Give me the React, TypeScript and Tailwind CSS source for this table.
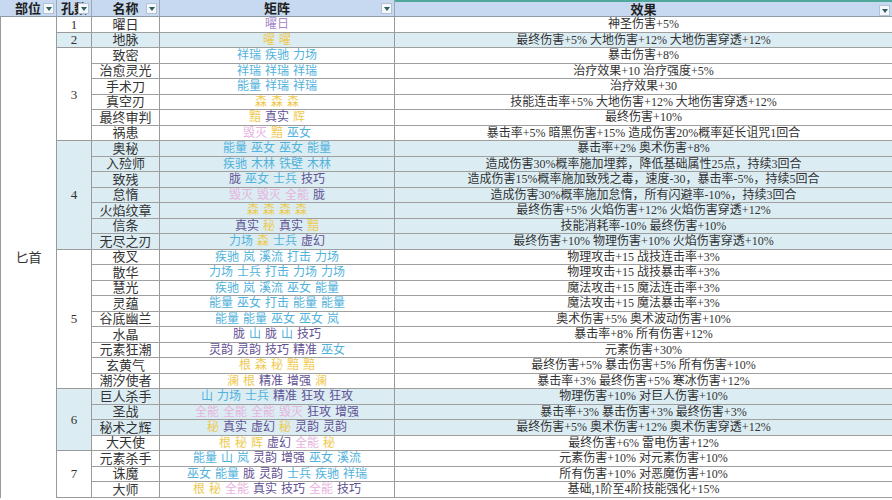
import React from "react";

// colour of each matrix word
const tone: Record<string, string> = {
  b: "text-[#52b2dc]",
  p: "text-[#5f5093]",
  k: "text-[#e7b4de]",
  y: "text-[#efca4f]",
  m: "text-[#a688c9]",
};

type Row = { name: string; matrix: string; effect: string; hl?: boolean };
type Group = { n: string; hl?: boolean; rows: Row[] };

const groups: Group[] = [
  { n: "1", rows: [{ name: "曜日", matrix: "m:曜日", effect: "神圣伤害+5%" }] },
  {
    n: "2",
    hl: true,
    rows: [{ name: "地脉", matrix: "y:曜 y:曜", effect: "最终伤害+5% 大地伤害+12% 大地伤害穿透+12%", hl: true }],
  },
  {
    n: "3",
    rows: [
      { name: "致密", matrix: "b:祥瑞 b:疾驰 b:力场", effect: "暴击伤害+8%" },
      { name: "治愈灵光", matrix: "b:祥瑞 b:祥瑞 b:祥瑞", effect: "治疗效果+10 治疗强度+5%" },
      { name: "手术刀", matrix: "b:能量 b:祥瑞 b:祥瑞", effect: "治疗效果+30" },
      { name: "真空刃", matrix: "y:森 y:森 y:森", effect: "技能连击率+5% 大地伤害+12% 大地伤害穿透+12%" },
      { name: "最终审判", matrix: "y:黯 p:真实 y:辉", effect: "最终伤害+10%" },
      { name: "祸患", matrix: "k:毁灭 y:黯 b:巫女", effect: "暴击率+5% 暗黑伤害+15% 造成伤害20%概率延长诅咒1回合" },
    ],
  },
  {
    n: "4",
    hl: true,
    rows: [
      { name: "奥秘", matrix: "b:能量 b:巫女 b:巫女 b:能量", effect: "暴击率+2% 奥术伤害+8%", hl: true },
      { name: "入殓师", matrix: "b:疾驰 b:木林 b:铁壁 b:木林", effect: "造成伤害30%概率施加埋葬，降低基础属性25点，持续3回合", hl: true },
      { name: "致残", matrix: "p:胧 b:巫女 b:士兵 p:技巧", effect: "造成伤害15%概率施加致残之毒，速度-30，暴击率-5%，持续5回合", hl: true },
      { name: "怠惰", matrix: "k:毁灭 k:毁灭 k:全能 p:胧", effect: "造成伤害30%概率施加怠惰，所有闪避率-10%，持续3回合", hl: true },
      { name: "火焰纹章", matrix: "y:森 y:森 y:森 y:森", effect: "最终伤害+5% 火焰伤害+12% 火焰伤害穿透+12%", hl: true },
      { name: "信条", matrix: "p:真实 y:秘 p:真实 y:黯", effect: "技能消耗率-10% 最终伤害+10%", hl: true },
      { name: "无尽之刃", matrix: "b:力场 y:森 b:士兵 p:虚幻", effect: "最终伤害+10% 物理伤害+10% 火焰伤害穿透+10%", hl: true },
    ],
  },
  {
    n: "5",
    rows: [
      { name: "夜叉", matrix: "b:疾驰 b:岚 b:溪流 b:打击 b:力场", effect: "物理攻击+15 战技连击率+3%" },
      { name: "散华", matrix: "b:力场 b:士兵 b:打击 b:力场 b:力场", effect: "物理攻击+15 战技暴击率+3%" },
      { name: "慧光", matrix: "b:疾驰 b:岚 b:溪流 b:巫女 b:能量", effect: "魔法攻击+15 魔法连击率+3%" },
      { name: "灵蕴", matrix: "b:能量 b:巫女 b:打击 b:能量 b:能量", effect: "魔法攻击+15 魔法暴击率+3%" },
      { name: "谷底幽兰", matrix: "b:能量 b:能量 b:巫女 b:巫女 b:岚", effect: "奥术伤害+5% 奥术波动伤害+10%" },
      { name: "水晶", matrix: "p:胧 b:山 p:胧 b:山 p:技巧", effect: "暴击率+8% 所有伤害+12%" },
      { name: "元素狂潮", matrix: "p:灵韵 p:灵韵 p:技巧 p:精准 b:巫女", effect: "元素伤害+30%" },
      { name: "玄黄气", matrix: "y:根 y:森 y:秘 y:黯 y:黯", effect: "最终伤害+5% 暴击伤害+5% 所有伤害+10%" },
      { name: "潮汐使者", matrix: "y:澜 y:根 p:精准 p:增强 y:澜", effect: "暴击率+3% 最终伤害+5% 寒冰伤害+12%" },
    ],
  },
  {
    n: "6",
    hl: true,
    rows: [
      { name: "巨人杀手", matrix: "b:山 b:力场 b:士兵 p:精准 p:狂攻 p:狂攻", effect: "物理伤害+10% 对巨人伤害+10%", hl: true },
      { name: "圣战", matrix: "k:全能 k:全能 k:全能 k:毁灭 p:狂攻 p:增强", effect: "暴击率+3% 暴击伤害+3% 最终伤害+3%", hl: true },
      { name: "秘术之辉", matrix: "y:秘 p:真实 p:虚幻 y:秘 p:灵韵 p:灵韵", effect: "最终伤害+5% 奥术伤害+12% 奥术伤害穿透+12%", hl: true },
      { name: "大天使", matrix: "y:根 y:秘 y:辉 p:虚幻 k:全能 y:秘", effect: "最终伤害+6% 雷电伤害+12%" },
    ],
  },
  {
    n: "7",
    rows: [
      { name: "元素杀手", matrix: "b:能量 b:山 b:岚 p:灵韵 p:增强 b:巫女 b:溪流", effect: "元素伤害+10% 对元素伤害+10%" },
      { name: "诛魔", matrix: "b:巫女 b:能量 p:胧 p:灵韵 b:士兵 b:疾驰 b:祥瑞", effect: "所有伤害+10% 对恶魔伤害+10%" },
      { name: "大师", matrix: "y:根 y:秘 k:全能 p:真实 p:技巧 k:全能 p:技巧", effect: "基础,1阶至4阶技能强化+15%" },
    ],
  },
];

function Drop() {
  return (
    <span className="absolute right-[2px] top-[3px] w-[11px] h-[11px] bg-[#f4f7fb] border border-[#b4c2d4] flex items-center justify-center">
      <svg width="6" height="4" viewBox="0 0 6 4">
        <path d="M0 0h6L3 4z" fill="#2f5f5a" />
      </svg>
    </span>
  );
}

function Head({ label, w, extra = "" }: { label: string; w: string; extra?: string }) {
  return (
    <div className={`relative ${w} h-full flex items-center justify-center border-r border-[#9aa7b6] overflow-hidden ${extra}`}>
      <span className="font-bold text-[13px] leading-none text-[#1e1e1e] whitespace-nowrap">{label}</span>
      <Drop />
    </div>
  );
}

export default function App() {
  return (
    <div
      className="w-[892px] h-[500px] overflow-hidden bg-white text-[12px] leading-none text-[#333]"
      style={{ fontFamily: '"Liberation Serif", "Noto Sans CJK SC", serif' }}
    >
      {/* header */}
      <div className="flex h-[17px] bg-[#c6d9f0] border-b border-[#8f9aa8]">
        <Head label="部位" w="w-[57px]" />
        <Head label="孔数" w="w-[35px]" />
        <Head label="名称" w="w-[68px]" />
        <Head label="矩阵" w="w-[235px]" />
        <Head label="效果" w="flex-1" extra="border-r-0 border-t-2 border-t-[#4ea89c]" />
      </div>

      <div className="flex">
        <div className="w-[57px] flex items-center justify-center border-l border-r border-[#9a9a9a] text-[13px]">
          匕首
        </div>
        <div className="flex-1 flex flex-col">
          {groups.map((g) => (
            <div key={g.n} className="flex">
              <div
                className={`w-[35px] flex items-center justify-center border-r border-b border-[#9a9a9a] text-[13px] leading-none ${
                  g.hl ? "bg-[#dbedf3]" : "bg-white"
                }`}
              >
                {g.n}
              </div>
              <div className="flex-1 flex flex-col">
                {g.rows.map((r) => (
                  <div
                    key={r.name}
                    className={`flex h-[15.5px] border-b border-[#9f9f9f] ${r.hl ? "bg-[#dbedf3]" : "bg-white"}`}
                  >
                    <div className="w-[68px] flex items-center justify-center border-r border-[#9a9a9a] text-[13px] whitespace-nowrap">
                      {r.name}
                    </div>
                    <div className="w-[235px] flex items-center justify-center gap-1 border-r border-[#9a9a9a] whitespace-nowrap">
                      {r.matrix.split(" ").map((t, j) => {
                        const [c, word] = t.split(":");
                        return (
                          <span key={j} className={tone[c]}>
                            {word}
                          </span>
                        );
                      })}
                    </div>
                    <div className="flex-1 flex items-center justify-center whitespace-nowrap">{r.effect}</div>
                  </div>
                ))}
              </div>
            </div>
          ))}
        </div>
      </div>
    </div>
  );
}
